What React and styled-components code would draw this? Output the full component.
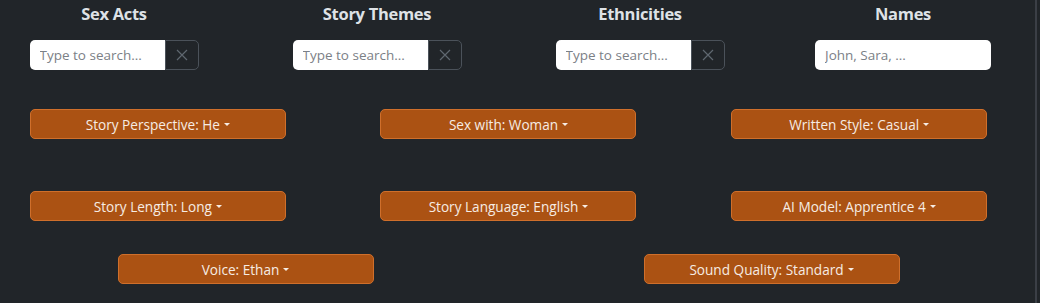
import styled, { createGlobalStyle } from "styled-components";

const GlobalStyle = createGlobalStyle`
  html, body {
    margin: 0;
    padding: 0;
    background: #212529;
    overflow: hidden;
  }
  * { box-sizing: border-box; }
`;

const Page = styled.div`
  width: 1040px;
  height: 303px;
  background: #212529;
  display: flex;
  font-family: "Open Sans", "Noto Sans", sans-serif;
`;

const Main = styled.div`
  width: 1035px;
  overflow: visible;
`;

const Edge = styled.div`
  width: 2px;
  background: #3b3f46;
`;

const Row = styled.div`
  display: grid;
  grid-template-columns: repeat(${(p) => p.cols}, 1fr);
  width: 1052px;
  margin-left: -17.5px;
  margin-top: ${(p) => p.top}px;
`;

const Col = styled.div`
  display: flex;
  flex-direction: column;
  align-items: center;
`;

const Title = styled.div`
  color: #dee2e6;
  font-weight: 700;
  font-size: 16.5px;
  line-height: 20px;
  letter-spacing: -0.3px;
  margin-top: 4px;
`;

const InputGroup = styled.div`
  display: flex;
  margin-top: 16px;
  height: 30px;
`;

const SearchInput = styled.input`
  width: ${(p) => p.w}px;
  height: 30px;
  border: none;
  background: #fff;
  border-radius: ${(p) => (p.joined ? "5px 0 0 5px" : "5px")};
  padding: 0 10px;
  font-family: inherit;
  font-size: 13.5px;
  color: #212529;
  outline: none;
  &::placeholder { color: #7b8086; }
`;

const ClearButton = styled.button`
  width: 34px;
  height: 30px;
  background: transparent;
  border: 1px solid #4b525a;
  border-radius: 0 5px 5px 0;
  display: flex;
  align-items: center;
  justify-content: center;
  padding: 0;
`;

const Dropdown = styled.button`
  width: 256px;
  height: 30px;
  background: #ab5213;
  border: 1px solid #cf6f2b;
  border-radius: 5px;
  color: #f6ece4;
  font-family: inherit;
  font-size: 13.6px;
  display: flex;
  align-items: center;
  justify-content: center;
  gap: 4px;
  padding: 0;
`;

const Caret = styled.span`
  width: 0;
  height: 0;
  border-left: 3.5px solid transparent;
  border-right: 3.5px solid transparent;
  border-top: 3.5px solid #f6ece4;
  margin-top: 1px;
`;

const XIcon = () => (
  <svg width="12" height="12" viewBox="0 0 12 12">
    <path d="M1 1 L11 11 M11 1 L1 11" stroke="#5f6770" strokeWidth="1.2" />
  </svg>
);

const searches = [
  { title: "Sex Acts", ph: "Type to search...", clear: true },
  { title: "Story Themes", ph: "Type to search...", clear: true },
  { title: "Ethnicities", ph: "Type to search...", clear: true },
  { title: "Names", ph: "John, Sara, ...", clear: false },
];

const rows = [
  { top: 39, items: ["Story Perspective: He", "Sex with: Woman", "Written Style: Casual"] },
  { top: 52, items: ["Story Length: Long", "Story Language: English", "AI Model: Apprentice 4"] },
  { top: 33, items: ["Voice: Ethan", "Sound Quality: Standard"] },
];

export default function App() {
  return (
    <Page>
      <GlobalStyle />
      <Main>
        <Row cols={4} top={0}>
          {searches.map((s) => (
            <Col key={s.title}>
              <Title>{s.title}</Title>
              <InputGroup>
                <SearchInput
                  placeholder={s.ph}
                  w={s.clear ? 135 : 176}
                  joined={s.clear}
                />
                {s.clear && (
                  <ClearButton>
                    <XIcon />
                  </ClearButton>
                )}
              </InputGroup>
            </Col>
          ))}
        </Row>
        {rows.map((r, i) => (
          <Row key={i} cols={r.items.length} top={r.top}>
            {r.items.map((label) => (
              <Col key={label}>
                <Dropdown>
                  {label}
                  <Caret />
                </Dropdown>
              </Col>
            ))}
          </Row>
        ))}
      </Main>
      <Edge />
    </Page>
  );
}
